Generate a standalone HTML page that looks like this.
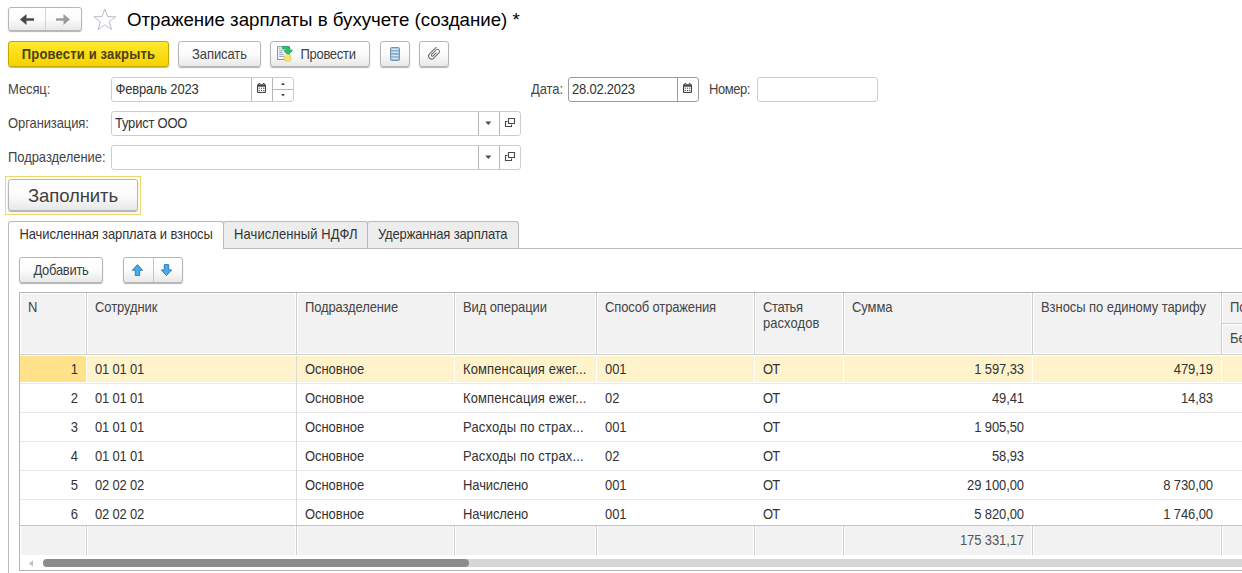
<!DOCTYPE html>
<html><head><meta charset="utf-8">
<style>
*{box-sizing:border-box;margin:0;padding:0}
html,body{width:1242px;height:573px;overflow:hidden;background:#fff}
body{font-family:"Liberation Sans",sans-serif;font-size:13px;color:#333;position:relative;letter-spacing:-0.1px}
.abs{position:absolute}
.t{display:inline-block;line-height:15px;transform-origin:0 12px;transform:scaleY(1.09);white-space:nowrap}
.btn{position:absolute;border:1px solid #b6b6b6;border-radius:3px;background:linear-gradient(#ffffff 0%,#fcfcfc 50%,#e8e8e8 100%);box-shadow:0 1px 1px rgba(0,0,0,.3);color:#3f3f3f;font-size:13px;text-align:center;white-space:nowrap}
.inp{position:absolute;border:1px solid #cdcdcd;border-radius:3px;background:#fff;height:25px}
.lbl{position:absolute;font-size:13px;color:#454545;white-space:nowrap}
.txt{position:absolute;font-size:13px;color:#333;white-space:nowrap}
.vsep{position:absolute;top:0;bottom:0;width:1px;background:#b6b6b6}
.th{position:absolute;top:0;height:61px;border-left:1px solid #cfcfcf;box-shadow:inset 1px 0 0 #fff,-1px 0 0 #fff;padding:7px 0 0 8px;color:#454545;font-size:13px;line-height:16px;white-space:nowrap;overflow:hidden}
.row{position:absolute;left:0;height:29px;width:1223px}
.c{position:absolute;top:0;height:29px;line-height:29px;font-size:13px;color:#333;white-space:nowrap;overflow:hidden}
</style></head><body>

<div class="btn" style="left:8px;top:7px;width:74px;height:24px"></div>
<div class="abs" style="left:45px;top:8px;width:1px;height:22px;background:#d3d3d3"></div>
<svg class="abs" style="left:8px;top:7px" width="74" height="24" viewBox="0 0 74 24">
 <path d="M12 12.5 L18.5 7 L18.5 11.2 L26 11.2 L26 13.8 L18.5 13.8 L18.5 18 Z" fill="#4a4a4a"/>
 <path d="M62 12.5 L55.5 7 L55.5 11.2 L48 11.2 L48 13.8 L55.5 13.8 L55.5 18 Z" fill="#9c9c9c"/>
</svg>
<svg class="abs" style="left:91.5px;top:6.5px" width="26" height="24" viewBox="0 0 26 24">
 <path d="M13 1.6 L15.9 9.5 L24.3 9.7 L17.6 14.8 L20 22.9 L13 18.1 L6 22.9 L8.4 14.8 L1.7 9.7 L10.1 9.5 Z" fill="#fff" stroke="#b9bdc4" stroke-width="1.03" transform="translate(12.8 12) scale(.965) translate(-13 -12)"/>
</svg>
<div class="abs" style="left:127px;top:7.6px;font-size:18.7px;color:#000;white-space:nowrap;line-height:24px;letter-spacing:0"><span class="t" style="transform:scaleY(1.02);line-height:24px;transform-origin:0 18px;">Отражение зарплаты в бухучете (создание) *</span></div>
<div class="btn" style="left:8px;top:41px;width:161px;height:26px;background:linear-gradient(#ffe92e,#f6d100);border-color:#c6a700;font-weight:bold;color:#4b4114;line-height:25px;letter-spacing:0.17px"><span class="t">Провести и закрыть</span></div>
<div class="btn" style="left:178px;top:41px;width:83px;height:26px;line-height:25px"><span class="t">Записать</span></div>
<div class="btn" style="left:270px;top:41px;width:100px;height:26px;line-height:25px;text-align:left;padding-left:29.5px"><span class="t" style="letter-spacing:-0.3px;">Провести</span></div>
<svg class="abs" style="left:266px;top:38px" width="40" height="32" viewBox="0 0 40 32">
 <rect x="11.5" y="8.7" width="12" height="12.8" fill="#f2f5fa" stroke="#8996aa" stroke-width="1"/>
 <path d="M13.2 10.5h1.2M13.2 12.4h3.5M13.2 14.4h3.5M13.2 16.4h4.3M13.2 18.4h5" stroke="#8e9bb0" stroke-width=".9"/>
 <path d="M16.4 8.5 H21 Q24 8.7 24.1 11.6 V12.2 L26.6 12.4 L21.8 16.9 L17.9 12.4 L20.4 12.2 Q20.5 11.1 19.3 11 L16.4 10.9Z" fill="#2fc06c" stroke="#1f9d52" stroke-width=".8" stroke-linejoin="round"/>
 <path d="M18.5 17.6 V22 A3.2 1.3 0 0 0 24.9 22 V17.6Z" fill="#efd84e"/>
 <ellipse cx="21.7" cy="17.6" rx="3.2" ry="1.2" fill="#f7e98a"/>
 <path d="M18.5 19 A3.2 1.2 0 0 0 24.9 19 M18.5 20.5 A3.2 1.2 0 0 0 24.9 20.5 M18.5 22 A3.2 1.2 0 0 0 24.9 22" fill="none" stroke="#fbf3b0" stroke-width=".7"/>
 <path d="M18.5 17.6 V22 A3.2 1.3 0 0 0 24.9 22 V17.6" fill="none" stroke="#d9bd38" stroke-width=".5"/>
</svg>
<div class="btn" style="left:380px;top:41px;width:30px;height:26px"></div>
<svg class="abs" style="left:380px;top:38px" width="36" height="32" viewBox="0 0 36 32">
 <rect x="10.5" y="9.5" width="9" height="13" rx="1.2" fill="#8aabc6" stroke="#7394b2" stroke-width="1"/>
 <path d="M11.3 11.2h7.4M11.3 14.3h7.4M11.3 17.5h7.4M11.3 20.6h7.4" stroke="#d3e6f5" stroke-width="1.5"/>
</svg>
<div class="btn" style="left:419px;top:41px;width:30px;height:26px"></div>
<svg class="abs" style="left:416px;top:38px" width="36" height="32" viewBox="0 0 36 32">
 <g transform="translate(18.2,15.4) rotate(-45) translate(-6.6,0)"><path d="M12.6 -3 H3 a3 3 0 0 0 0 6 H10.3 a2.05 2.05 0 0 0 0 -4.1 H4.2 a1.05 1.05 0 0 0 0 2.1 H8.8" fill="none" stroke="#686868" stroke-width="1"/></g>
</svg>
<div class="lbl" style="left:8px;top:81.5px"><span class="t">Месяц:</span></div>
<div class="inp" style="left:111px;top:77px;width:183px"><div class="vsep" style="left:139px"></div><div class="vsep" style="left:160px"></div><div class="abs" style="left:161px;top:11px;width:20px;height:1px;background:#b6b6b6"></div></div>
<div class="txt" style="left:115.5px;top:81.5px"><span class="t" style="letter-spacing:-0.2px;">Февраль 2023</span></div>
<svg class="abs" style="left:257px;top:83px" width="9" height="10" viewBox="0 0 9 10"><rect x="0" y="1.2" width="9" height="8.8" rx=".9" fill="#444"/><rect x="1.1" y="3.7" width="6.8" height="5.2" fill="#fff"/><rect x="1.5" y="0" width="1.7" height="2" rx=".5" fill="#444"/><rect x="5.8" y="0" width="1.7" height="2" rx=".5" fill="#444"/><circle cx="2.35" cy="1.35" r=".45" fill="#fff"/><circle cx="6.65" cy="1.35" r=".45" fill="#fff"/><g fill="#444"><circle cx="2.3" cy="5.2" r=".6"/><circle cx="4.5" cy="5.2" r=".6"/><circle cx="6.7" cy="5.2" r=".6"/><circle cx="2.3" cy="7.4" r=".6"/><circle cx="4.5" cy="7.4" r=".6"/><circle cx="6.7" cy="7.4" r=".6"/></g></svg>
<svg class="abs" style="left:279px;top:80px" width="8" height="20" viewBox="0 0 8 20"><path d="M2 5 L4 2.6 L6 5Z" fill="#4a4a4a"/><path d="M2 14 L4 16.4 L6 14Z" fill="#4a4a4a"/></svg>
<div class="lbl" style="left:531px;top:81.5px"><span class="t">Дата:</span></div>
<div class="inp" style="left:568px;top:77px;width:131px;border-color:#9c9c9c"><div class="vsep" style="left:108px;background:#9c9c9c"></div></div>
<div class="txt" style="left:572px;top:81.5px"><span class="t" style="letter-spacing:-0.22px;">28.02.2023</span></div>
<svg class="abs" style="left:683px;top:83px" width="9" height="10" viewBox="0 0 9 10"><rect x="0" y="1.2" width="9" height="8.8" rx=".9" fill="#444"/><rect x="1.1" y="3.7" width="6.8" height="5.2" fill="#fff"/><rect x="1.5" y="0" width="1.7" height="2" rx=".5" fill="#444"/><rect x="5.8" y="0" width="1.7" height="2" rx=".5" fill="#444"/><circle cx="2.35" cy="1.35" r=".45" fill="#fff"/><circle cx="6.65" cy="1.35" r=".45" fill="#fff"/><g fill="#444"><circle cx="2.3" cy="5.2" r=".6"/><circle cx="4.5" cy="5.2" r=".6"/><circle cx="6.7" cy="5.2" r=".6"/><circle cx="2.3" cy="7.4" r=".6"/><circle cx="4.5" cy="7.4" r=".6"/><circle cx="6.7" cy="7.4" r=".6"/></g></svg>
<div class="lbl" style="left:709px;top:81.5px"><span class="t" style="letter-spacing:-0.45px;">Номер:</span></div>
<div class="inp" style="left:757px;top:77px;width:121px"></div>
<div class="lbl" style="left:8px;top:115.5px"><span class="t" style="letter-spacing:-0.1px;">Организация:</span></div>
<div class="inp" style="left:111px;top:111px;width:410px"><div class="vsep" style="left:366px"></div><div class="vsep" style="left:387px"></div></div>
<div class="txt" style="left:115px;top:115.5px"><span class="t" style="letter-spacing:-0.22px;">Турист ООО</span></div>
<svg class="abs" style="left:484px;top:121px" width="8" height="5" viewBox="0 0 8 5"><path d="M1.3 .6 H7.3 L4.3 3.9Z" fill="#4a4a4a"/></svg>
<svg class="abs" style="left:504px;top:117px" width="12" height="12" viewBox="0 0 12 12"><path d="M4.5 1.5 H10.5 V6.5 H4.5Z M3.5 4.5 H1.5 V9.5 H7.5 V7.5" fill="none" stroke="#4a4a4a" stroke-width="1.1"/></svg>
<div class="lbl" style="left:8px;top:149.5px"><span class="t" style="letter-spacing:-0.06px;">Подразделение:</span></div>
<div class="inp" style="left:111px;top:145px;width:410px"><div class="vsep" style="left:366px"></div><div class="vsep" style="left:387px"></div></div>
<svg class="abs" style="left:484px;top:155px" width="8" height="5" viewBox="0 0 8 5"><path d="M1.3 .6 H7.3 L4.3 3.9Z" fill="#4a4a4a"/></svg>
<svg class="abs" style="left:504px;top:151px" width="12" height="12" viewBox="0 0 12 12"><path d="M4.5 1.5 H10.5 V6.5 H4.5Z M3.5 4.5 H1.5 V9.5 H7.5 V7.5" fill="none" stroke="#4a4a4a" stroke-width="1.1"/></svg>
<div class="abs" style="left:5px;top:176px;width:136px;height:39px;border:1px solid #efd56f;background:#fffdf3"></div>
<div class="btn" style="left:8px;top:179px;width:130px;height:32px;font-size:18.5px;line-height:31px"><span class="t" style="letter-spacing:-0.1px;transform:none;">Заполнить</span></div>
<div class="abs" style="left:8px;top:248px;width:1234px;height:1px;background:#b9b9b9"></div>
<div class="abs" style="left:8px;top:248px;width:1px;height:325px;background:#b9b9b9"></div>
<div class="abs" style="left:223px;top:221px;width:145px;height:27px;background:#ededed;border:1px solid #b9b9b9;border-bottom:none;border-radius:3px 3px 0 0"></div>
<div class="abs" style="left:367px;top:221px;width:152px;height:27px;background:#ededed;border:1px solid #b9b9b9;border-bottom:none;border-radius:3px 3px 0 0"></div>
<div class="abs" style="left:8px;top:221px;width:216px;height:28px;background:#fff;border:1px solid #b9b9b9;border-bottom:none;border-radius:3px 3px 0 0"></div>
<div class="txt" style="left:19.5px;top:227px"><span class="t" style="letter-spacing:-0.11px;">Начисленная зарплата и взносы</span></div>
<div class="txt" style="left:234px;top:227px"><span class="t" style="letter-spacing:0.09px;">Начисленный НДФЛ</span></div>
<div class="txt" style="left:378px;top:227px"><span class="t" style="letter-spacing:-0.16px;">Удержанная зарплата</span></div>
<div class="btn" style="left:19px;top:257px;width:84px;height:26px;line-height:25px"><span class="t" style="letter-spacing:-0.3px;">Добавить</span></div>
<div class="btn" style="left:123px;top:257px;width:60px;height:26px"></div>
<div class="abs" style="left:153px;top:258px;width:1px;height:24px;background:#c6c6c6"></div>
<svg class="abs" style="left:130px;top:262px" width="16" height="16" viewBox="0 0 16 16"><path d="M7.5 2.6 L12.7 8.3 H9.7 V13.6 H5.3 V8.3 H2.3Z" fill="#4ba9ea" stroke="#2a78b9" stroke-width=".9"/></svg>
<svg class="abs" style="left:159px;top:262px" width="16" height="16" viewBox="0 0 16 16"><path d="M7.5 13.6 L12.7 7.9 H9.7 V2.6 H5.3 V7.9 H2.3Z" fill="#4ba9ea" stroke="#2a78b9" stroke-width=".9"/></svg>
<div class="abs" id="tbl" style="left:19px;top:292px;width:1223px;height:279px;border-top:1px solid #b4b4b4;border-left:1px solid #b4b4b4;border-bottom:1px solid #b4b4b4;overflow:hidden">
<div class="abs" style="left:0;top:0;width:1223px;height:62px;background:#f2f2f2;border-bottom:1px solid #cfcfcf;box-shadow:inset 0 -1px 0 #fff, inset 1px 1px 0 #fff"></div>
<div class="th" style="left:0px;width:67px;border-left:none;box-shadow:none;"><span class="t">N</span></div>
<div class="th" style="left:66px;width:210px;"><span class="t" style="letter-spacing:-0.1px;">Сотрудник</span></div>
<div class="th" style="left:276px;width:158px;"><span class="t" style="letter-spacing:-0.13px;">Подразделение</span></div>
<div class="th" style="left:434px;width:142px;"><span class="t" style="letter-spacing:-0.1px;">Вид операции</span></div>
<div class="th" style="left:576px;width:158px;"><span class="t" style="letter-spacing:-0.15px;">Способ отражения</span></div>
<div class="th" style="left:734px;width:89px;"><span class="t" style="letter-spacing:-0.38px;">Статья</span><br><span class="t" style="letter-spacing:0.05px;">расходов</span></div>
<div class="th" style="left:823px;width:189px;"><span class="t" style="letter-spacing:-0.1px;">Сумма</span></div>
<div class="th" style="left:1012px;width:189px;"><span class="t" style="letter-spacing:-0.06px;">Взносы по единому тарифу</span></div>
<div class="th" style="left:1201px;width:30px;height:31px;border-bottom:1px solid #cfcfcf"><span class="t">По</span></div>
<div class="th" style="left:1201px;top:31px;width:30px;height:30px;padding-top:7px;box-shadow:inset 1px 1px 0 #fff"><span class="t">Бе</span></div>
<div class="row" style="top:62px">
<div class="abs" style="left:0;top:1px;width:66px;height:26px;background:#ffe28a"></div>
<div class="abs" style="left:67px;top:1px;width:209px;height:26px;background:#fff3cc"></div>
<div class="abs" style="left:277px;top:1px;width:157px;height:26px;background:#fff3cc"></div>
<div class="abs" style="left:435px;top:1px;width:141px;height:26px;background:#fff3cc"></div>
<div class="abs" style="left:577px;top:1px;width:157px;height:26px;background:#fff3cc"></div>
<div class="abs" style="left:735px;top:1px;width:88px;height:26px;background:#fff3cc"></div>
<div class="abs" style="left:824px;top:1px;width:188px;height:26px;background:#fff3cc"></div>
<div class="abs" style="left:1013px;top:1px;width:188px;height:26px;background:#fff3cc"></div>
<div class="abs" style="left:1202px;top:1px;width:30px;height:26px;background:#fff3cc"></div>
<div class="abs" style="left:0;top:28px;width:1223px;height:1px;background:#e9e9ec"></div>
<div class="c" style="left:0;width:58px;text-align:right"><span class="t">1</span></div>
<div class="c" style="left:75px;width:201px"><span class="t" style="letter-spacing:-0.2px;">01 01 01</span></div>
<div class="c" style="left:285px;width:149px"><span class="t" style="letter-spacing:-0.06px;">Основное</span></div>
<div class="c" style="left:443px;width:133px"><span class="t" style="letter-spacing:0.12px;">Компенсация ежег...</span></div>
<div class="c" style="left:585px;width:149px"><span class="t">001</span></div>
<div class="c" style="left:743px;width:80px"><span class="t" style="letter-spacing:-0.8px;">ОТ</span></div>
<div class="c" style="left:824px;width:180px;text-align:right"><span class="t">1 597,33</span></div>
<div class="c" style="left:1013px;width:180px;text-align:right"><span class="t">479,19</span></div>
</div>
<div class="row" style="top:91px">
<div class="abs" style="left:0;top:28px;width:1223px;height:1px;background:#e9e9ec"></div>
<div class="c" style="left:0;width:58px;text-align:right"><span class="t">2</span></div>
<div class="c" style="left:75px;width:201px"><span class="t" style="letter-spacing:-0.2px;">01 01 01</span></div>
<div class="c" style="left:285px;width:149px"><span class="t" style="letter-spacing:-0.06px;">Основное</span></div>
<div class="c" style="left:443px;width:133px"><span class="t" style="letter-spacing:0.12px;">Компенсация ежег...</span></div>
<div class="c" style="left:585px;width:149px"><span class="t">02</span></div>
<div class="c" style="left:743px;width:80px"><span class="t" style="letter-spacing:-0.8px;">ОТ</span></div>
<div class="c" style="left:824px;width:180px;text-align:right"><span class="t">49,41</span></div>
<div class="c" style="left:1013px;width:180px;text-align:right"><span class="t">14,83</span></div>
</div>
<div class="row" style="top:120px">
<div class="abs" style="left:0;top:28px;width:1223px;height:1px;background:#e9e9ec"></div>
<div class="c" style="left:0;width:58px;text-align:right"><span class="t">3</span></div>
<div class="c" style="left:75px;width:201px"><span class="t" style="letter-spacing:-0.2px;">01 01 01</span></div>
<div class="c" style="left:285px;width:149px"><span class="t" style="letter-spacing:-0.06px;">Основное</span></div>
<div class="c" style="left:443px;width:133px"><span class="t" style="letter-spacing:0.15px;">Расходы по страх...</span></div>
<div class="c" style="left:585px;width:149px"><span class="t">001</span></div>
<div class="c" style="left:743px;width:80px"><span class="t" style="letter-spacing:-0.8px;">ОТ</span></div>
<div class="c" style="left:824px;width:180px;text-align:right"><span class="t">1 905,50</span></div>
<div class="c" style="left:1013px;width:180px;text-align:right"><span class="t"></span></div>
</div>
<div class="row" style="top:149px">
<div class="abs" style="left:0;top:28px;width:1223px;height:1px;background:#e9e9ec"></div>
<div class="c" style="left:0;width:58px;text-align:right"><span class="t">4</span></div>
<div class="c" style="left:75px;width:201px"><span class="t" style="letter-spacing:-0.2px;">01 01 01</span></div>
<div class="c" style="left:285px;width:149px"><span class="t" style="letter-spacing:-0.06px;">Основное</span></div>
<div class="c" style="left:443px;width:133px"><span class="t" style="letter-spacing:0.15px;">Расходы по страх...</span></div>
<div class="c" style="left:585px;width:149px"><span class="t">02</span></div>
<div class="c" style="left:743px;width:80px"><span class="t" style="letter-spacing:-0.8px;">ОТ</span></div>
<div class="c" style="left:824px;width:180px;text-align:right"><span class="t">58,93</span></div>
<div class="c" style="left:1013px;width:180px;text-align:right"><span class="t"></span></div>
</div>
<div class="row" style="top:178px">
<div class="abs" style="left:0;top:28px;width:1223px;height:1px;background:#e9e9ec"></div>
<div class="c" style="left:0;width:58px;text-align:right"><span class="t">5</span></div>
<div class="c" style="left:75px;width:201px"><span class="t" style="letter-spacing:-0.2px;">02 02 02</span></div>
<div class="c" style="left:285px;width:149px"><span class="t" style="letter-spacing:-0.06px;">Основное</span></div>
<div class="c" style="left:443px;width:133px"><span class="t" style="letter-spacing:-0.1px;">Начислено</span></div>
<div class="c" style="left:585px;width:149px"><span class="t">001</span></div>
<div class="c" style="left:743px;width:80px"><span class="t" style="letter-spacing:-0.8px;">ОТ</span></div>
<div class="c" style="left:824px;width:180px;text-align:right"><span class="t">29 100,00</span></div>
<div class="c" style="left:1013px;width:180px;text-align:right"><span class="t">8 730,00</span></div>
</div>
<div class="row" style="top:207px">
<div class="abs" style="left:0;top:28px;width:1223px;height:1px;background:#e9e9ec"></div>
<div class="c" style="left:0;width:58px;text-align:right"><span class="t">6</span></div>
<div class="c" style="left:75px;width:201px"><span class="t" style="letter-spacing:-0.2px;">02 02 02</span></div>
<div class="c" style="left:285px;width:149px"><span class="t" style="letter-spacing:-0.06px;">Основное</span></div>
<div class="c" style="left:443px;width:133px"><span class="t" style="letter-spacing:-0.1px;">Начислено</span></div>
<div class="c" style="left:585px;width:149px"><span class="t">001</span></div>
<div class="c" style="left:743px;width:80px"><span class="t" style="letter-spacing:-0.8px;">ОТ</span></div>
<div class="c" style="left:824px;width:180px;text-align:right"><span class="t">5 820,00</span></div>
<div class="c" style="left:1013px;width:180px;text-align:right"><span class="t">1 746,00</span></div>
</div>
<div class="abs" style="left:276px;top:63px;width:1px;height:170px;background:#dadada"></div>
<div class="abs" style="left:0;top:232px;width:1223px;height:30px;background:#f2f2f2;border-top:1px solid #c4c4c4;box-shadow:inset 1px 0 0 #fff"></div>
<div class="abs" style="left:66px;top:233px;width:1px;height:29px;background:#cfcfcf;box-shadow:1px 0 0 #fff,-1px 0 0 #fff"></div>
<div class="abs" style="left:276px;top:233px;width:1px;height:29px;background:#cfcfcf;box-shadow:1px 0 0 #fff,-1px 0 0 #fff"></div>
<div class="abs" style="left:434px;top:233px;width:1px;height:29px;background:#cfcfcf;box-shadow:1px 0 0 #fff,-1px 0 0 #fff"></div>
<div class="abs" style="left:576px;top:233px;width:1px;height:29px;background:#cfcfcf;box-shadow:1px 0 0 #fff,-1px 0 0 #fff"></div>
<div class="abs" style="left:734px;top:233px;width:1px;height:29px;background:#cfcfcf;box-shadow:1px 0 0 #fff,-1px 0 0 #fff"></div>
<div class="abs" style="left:823px;top:233px;width:1px;height:29px;background:#cfcfcf;box-shadow:1px 0 0 #fff,-1px 0 0 #fff"></div>
<div class="abs" style="left:1012px;top:233px;width:1px;height:29px;background:#cfcfcf;box-shadow:1px 0 0 #fff,-1px 0 0 #fff"></div>
<div class="abs" style="left:1201px;top:233px;width:1px;height:29px;background:#cfcfcf;box-shadow:1px 0 0 #fff,-1px 0 0 #fff"></div>
<div class="c" style="left:824px;top:233px;width:180px;text-align:right;color:#555"><span class="t">175 331,17</span></div>
<div class="abs" style="left:0;top:262px;width:1223px;height:16px;background:#fff"></div>
<div class="abs" style="left:23px;top:266px;width:1200px;height:8px;background:#d6d6d6;border-radius:4px 0 0 4px"></div>
<div class="abs" style="left:23px;top:266px;width:426px;height:8px;background:#8c8c8c;border-radius:4px"></div>
<svg class="abs" style="left:8px;top:267px" width="6" height="7" viewBox="0 0 6 7"><path d="M5 .3 L.8 3.5 L5 6.7Z" fill="#c2c2c2"/></svg>
</div>
</body></html>
